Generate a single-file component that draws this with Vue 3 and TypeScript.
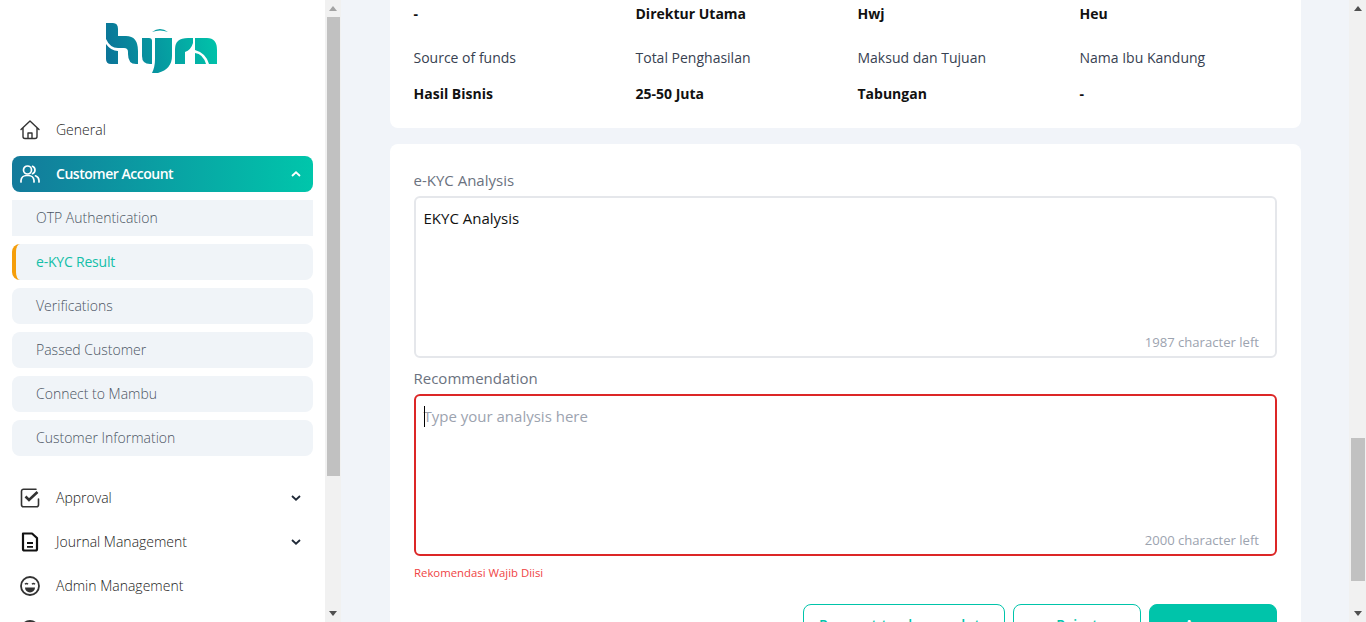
<script setup lang="ts">
interface Field {
  label?: string;
  value: string;
}

const topRow: Field[] = [
  { value: '-' },
  { value: 'Direktur Utama' },
  { value: 'Hwj' },
  { value: 'Heu' },
];

const secondRow: Field[] = [
  { label: 'Source of funds', value: 'Hasil Bisnis' },
  { label: 'Total Penghasilan', value: '25-50 Juta' },
  { label: 'Maksud dan Tujuan', value: 'Tabungan' },
  { label: 'Nama Ibu Kandung', value: '-' },
];

const subItems = [
  'OTP Authentication',
  'e-KYC Result',
  'Verifications',
  'Passed Customer',
  'Connect to Mambu',
  'Customer Information',
];

const analysis = 'EKYC Analysis';
</script>

<template>
  <div class="page">
    <aside class="sidebar">
      <div class="logo">
        <svg width="112" height="50" viewBox="0 0 112 50">
          <defs>
            <linearGradient id="logoGrad" gradientUnits="userSpaceOnUse" x1="0" y1="35" x2="112" y2="15">
              <stop offset="0" stop-color="#0b7498" />
              <stop offset="1" stop-color="#00c4aa" />
            </linearGradient>
          </defs>
          <g fill="url(#logoGrad)">
            <path d="M0 0H7Q12 0 12 6V13H20Q32 13 32 28V41H30Q22 41 22 31V29Q22 25 18 25H12Q4 25 0 16Z" />
            <path d="M0 21Q5 28 12 28V41H5Q0 41 0 36Z" />
            <path d="M36 15H43Q46 15 46 18V41H44Q36 41 36 33Z" />
            <path d="M46 9Q54 3 62 9Q54 6 46 9Z" />
            <path d="M49 15H66V33Q66 46 52 50H46Q49 44 49 36Z" />
            <path d="M69 41V26Q69 15 82 15H87V20Q85 27 79 29V41Z" />
            <path d="M89 15H101Q111 15 111 27V41H103Q100 30 89 27Z" />
            <path d="M89 41V30Q97 31 100 41Z" />
          </g>
        </svg>
      </div>

      <nav class="nav">
        <div class="nav-item">
          <svg class="icon" viewBox="0 0 20 20" fill="none" stroke="#333" stroke-width="1.4" stroke-linejoin="round" stroke-linecap="round">
            <path d="M1 9.500 10 1l9 8.500M3 8v8.500a2 2 0 0 0 2 2h10a2 2 0 0 0 2-2V8M8 18.500v-5.500h4v5.500" />
          </svg>
          <span>General</span>
        </div>

        <div class="nav-item active">
          <svg class="icon" viewBox="0 0 20 20" fill="none" stroke="#fff" stroke-width="1.700" stroke-linecap="round">
            <circle cx="7.500" cy="6" r="4" />
            <path d="M1 18v-1.500a5.500 5.500 0 0 1 5.500-5h2a5.500 5.500 0 0 1 5.500 5V18M12.500 2.300a4 4 0 0 1 0 7.400M15.500 11.800a5.500 5.500 0 0 1 3.500 4.700V18" />
          </svg>
          <span>Customer Account</span>
          <svg class="chevron" viewBox="0 0 10 6" fill="none" stroke="#fff" stroke-width="1.800">
            <path d="M1 5 5 1.300 9 5" />
          </svg>
        </div>

        <div class="sub-list">
          <div
            v-for="(item, i) in subItems"
            :key="item"
            class="sub-item"
            :class="{ square: i === 0, current: i === 1 }"
          >
            {{ item }}
          </div>
        </div>

        <div class="nav-item">
          <svg class="icon" viewBox="0 0 20 20" fill="none" stroke="#333" stroke-width="1.600">
            <path d="M16 1.200H3.500a2 2 0 0 0-2 2v13.600a2 2 0 0 0 2 2h13a2 2 0 0 0 2-2V11" stroke-linecap="round" />
            <path d="M5.500 8.500 9 12l8.500-8" stroke-width="2.600" />
          </svg>
          <span>Approval</span>
          <svg class="chevron" viewBox="0 0 10 6" fill="none" stroke="#1f2937" stroke-width="1.800">
            <path d="M1 1 5 4.700 9 1" />
          </svg>
        </div>

        <div class="nav-item">
          <svg class="icon" viewBox="0 0 20 20" fill="none" stroke="#111" stroke-width="2.200" stroke-linejoin="round">
            <path d="M3 1.500H12L17 6V17a1.500 1.500 0 0 1-1.500 1.500H4.500A1.500 1.500 0 0 1 3 17Z" />
            <path d="M7 11h6M7 14.800h6" stroke-width="1.800" />
          </svg>
          <span>Journal Management</span>
          <svg class="chevron" viewBox="0 0 10 6" fill="none" stroke="#1f2937" stroke-width="1.800">
            <path d="M1 1 5 4.700 9 1" />
          </svg>
        </div>

        <div class="nav-item">
          <svg class="icon" viewBox="0 0 20 20" fill="none" stroke="#333" stroke-width="1.800">
            <circle cx="10" cy="10" r="9" />
            <path d="M5 8.300q1.500-1.500 3 0M12 8.300q1.500-1.500 3 0" stroke-width="1.500" />
            <path d="M5 11.500h10a5 5 0 0 1-10 0Z" fill="#333" stroke="none" />
          </svg>
          <span>Admin Management</span>
        </div>

        <div class="nav-item">
          <svg class="icon" viewBox="0 0 20 20" fill="none" stroke="#333" stroke-width="1.800">
            <circle cx="10" cy="10" r="9" />
          </svg>
        </div>
      </nav>
    </aside>

    <div class="scrollbar side-bar">
      <span class="arrow up muted"></span>
      <div class="thumb"></div>
      <span class="arrow down"></span>
    </div>

    <main class="main">
      <section class="card info-card">
        <div class="info-grid">
          <div v-for="field in topRow" :key="field.value" class="value">{{ field.value }}</div>
          <div v-for="field in secondRow" :key="field.label" class="field">
            <div class="label">{{ field.label }}</div>
            <div class="value">{{ field.value }}</div>
          </div>
        </div>
      </section>

      <section class="card form-card">
        <label class="form-label">e-KYC Analysis</label>
        <div class="area-wrap">
          <textarea class="area" readonly :value="analysis"></textarea>
          <span class="counter">1987 character left</span>
        </div>

        <label class="form-label second">Recommendation</label>
        <div class="area-wrap">
          <textarea class="area invalid" readonly placeholder="Type your analysis here"></textarea>
          <span class="caret"></span>
          <span class="counter">2000 character left</span>
        </div>
        <p class="error">Rekomendasi Wajib Diisi</p>

        <div class="actions">
          <button class="btn outline wide">Request to change data</button>
          <button class="btn outline">Reject</button>
          <button class="btn solid">Approve</button>
        </div>
      </section>
    </main>

    <div class="scrollbar page-bar">
      <span class="arrow up"></span>
      <div class="thumb"></div>
      <span class="arrow down"></span>
    </div>
  </div>
</template>

<style>
html,
body {
  margin: 0;
  height: 100%;
  overflow: hidden;
}
</style>

<style scoped>
.page {
  display: flex;
  height: 622px;
  overflow: hidden;
  font-family: 'Open Sans', 'Liberation Sans', sans-serif;
  font-size: 14px;
  color: #111;
  background: #f1f4f9;
}

.sidebar {
  width: 325px;
  flex: none;
  background: #fff;
  overflow: hidden;
  padding: 0 12px;
  box-sizing: border-box;
}

.logo {
  height: 112px;
  padding: 23px 0 0 94px;
  box-sizing: border-box;
}

.logo svg {
  display: block;
}

.nav {
  display: flex;
  flex-direction: column;
  gap: 8px;
  font-weight: 300;
}

.nav-item {
  display: flex;
  align-items: center;
  height: 36px;
  flex: none;
  padding: 0 12px 0 8px;
  border-radius: 8px;
  color: #222;
}

.nav-item span {
  flex: 1;
  padding-bottom: 2px;
}

.nav-item.active {
  background: linear-gradient(90deg, #137a9b, #00c6ab);
  color: #fff;
  font-weight: 600;
  letter-spacing: -0.48px;
}

.icon {
  width: 20px;
  height: 20px;
  flex: none;
  margin-right: 16px;
}

.chevron {
  width: 10px;
  height: 6px;
  flex: none;
}

.sub-list {
  display: flex;
  flex-direction: column;
  gap: 8px;
  margin-bottom: 16px;
}

.sub-item {
  height: 36px;
  line-height: 36px;
  padding-left: 24px;
  border-radius: 8px;
  background: #f0f4f8;
  color: #4b5563;
}

.sub-item.square {
  border-radius: 0;
}

.sub-item.current {
  color: #14bfa8;
  font-weight: 400;
  letter-spacing: -0.2px;
  padding-left: 20px;
  border-left: 4px solid #f59e0b;
}

.scrollbar {
  position: relative;
  flex: none;
  background: #f1f1f1;
  box-sizing: border-box;
}

.side-bar {
  width: 16px;
  padding: 17px 1px 0 2px;
}

.side-bar .thumb {
  height: 459px;
}

.page-bar {
  width: 17px;
  padding: 438px 1px 0 2px;
}

.page-bar .thumb {
  height: 143px;
}

.thumb {
  background: #c1c1c1;
}

.arrow {
  position: absolute;
  left: 50%;
  margin-left: -4px;
  width: 0;
  height: 0;
  border-left: 4px solid transparent;
  border-right: 4px solid transparent;
}

.arrow.up {
  top: 6px;
  border-bottom: 5px solid #505050;
}

.arrow.up.muted {
  border-bottom-color: #a3a3a3;
}

.arrow.down {
  bottom: 6px;
  border-top: 5px solid #505050;
}

.main {
  flex: 1;
  min-width: 0;
  padding: 0 48px 0 49px;
  overflow: hidden;
}

.card {
  background: #fff;
  border-radius: 8px;
  padding: 0 24px;
}

.info-card {
  border-radius: 0 0 8px 8px;
  padding: 4px 24px 24px;
}

.info-grid {
  display: grid;
  grid-template-columns: repeat(4, 222px);
  row-gap: 24px;
  margin-left: -0.5px;
}

.field {
  display: flex;
  flex-direction: column;
  gap: 16px;
}

.label {
  line-height: 20px;
  color: #374151;
}

.value {
  line-height: 20px;
  font-weight: 700;
  color: #111;
}

.form-card {
  margin-top: 16px;
  padding-top: 26px;
  padding-bottom: 40px;
}

.form-label {
  display: block;
  height: 26px;
  line-height: 20px;
  font-size: 15px;
  color: #6b7280;
  margin-left: -0.5px;
}

.form-label.second {
  margin-top: 10px;
  height: 26px;
}

.area-wrap {
  position: relative;
  height: 162px;
}

.area {
  display: block;
  width: 100%;
  height: 100%;
  box-sizing: border-box;
  padding: 9px 7.5px;
  border: 2px solid #e5e7eb;
  border-radius: 6px;
  outline: none;
  resize: none;
  overflow: hidden;
  font-family: inherit;
  font-size: 15px;
  line-height: 22px;
  color: #111;
  background: #fff;
}

.area::placeholder {
  color: #9ca3af;
  opacity: 1;
}

.area.invalid {
  border-color: #dc2626;
}

.caret {
  position: absolute;
  left: 10px;
  top: 12px;
  width: 1px;
  height: 21px;
  background: #000;
}

.counter {
  position: absolute;
  right: 18px;
  bottom: 7px;
  font-size: 13.1px;
  line-height: 18px;
  color: #9ca3af;
}

.error {
  margin: 9px 0 0;
  font-size: 11.36px;
  line-height: 16px;
  color: #ef4444;
}

.actions {
  display: flex;
  justify-content: flex-end;
  gap: 8px;
  margin-top: 23px;
}

.btn {
  height: 40px;
  box-sizing: border-box;
  border-radius: 8px;
  font-family: inherit;
  font-size: 14px;
  font-weight: 600;
  width: 128px;
  padding: 0;
}

.btn.wide {
  width: 202px;
  letter-spacing: 0.5px;
}

.btn.outline {
  background: #fff;
  border: 1px solid #00c4aa;
  color: #00c4aa;
}

.btn.solid {
  background: #00c4aa;
  border: 1px solid #00c4aa;
  color: #fff;
}
</style>
